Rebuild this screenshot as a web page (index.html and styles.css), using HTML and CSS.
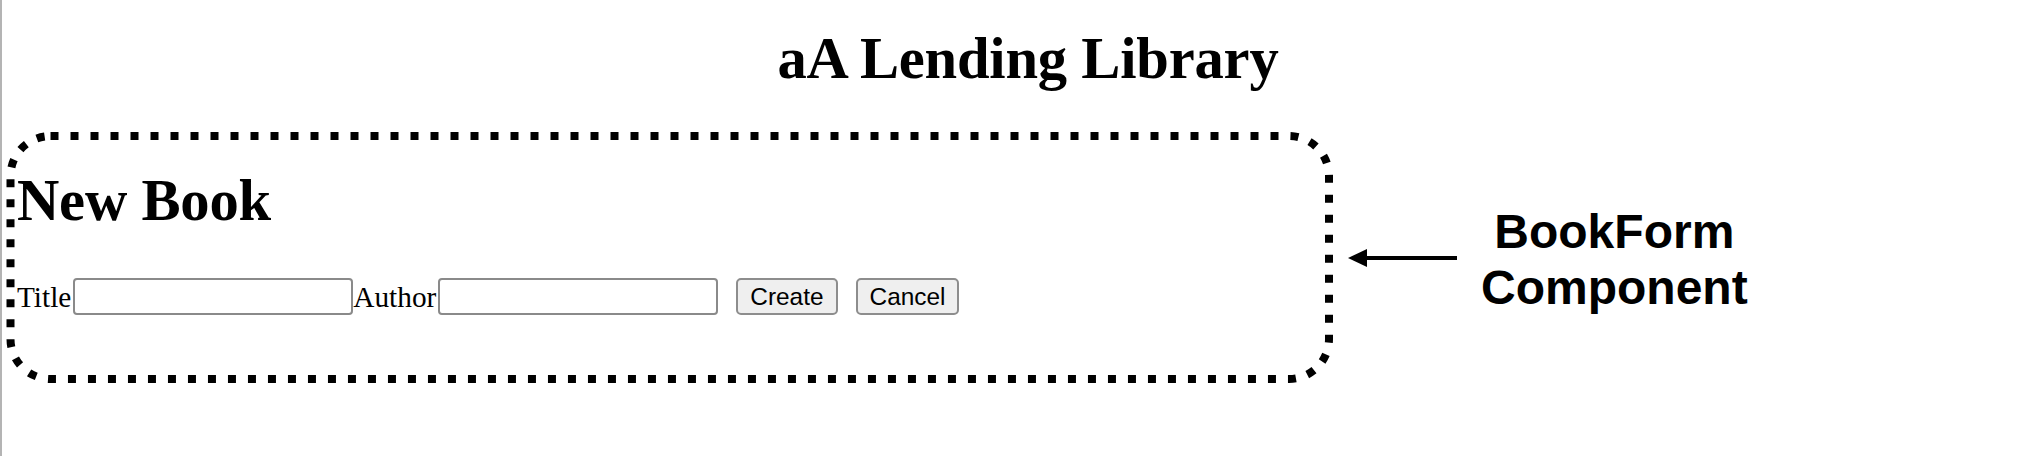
FILE: index.html
```html
<!DOCTYPE html>
<html lang="en">
<head>
<meta charset="utf-8">
<title>aA Lending Library</title>
<link rel="stylesheet" href="styles.css">
</head>
<body>
<div class="page">
  <header class="app-header">
    <h1 class="app-title">aA Lending Library</h1>
  </header>
  <div class="stage">
    <section class="book-form">
      <h1 class="form-title">New Book</h1>
      <form class="form-row">
        <label class="field-label" for="title">Title</label><input class="field-input" id="title" type="text">
        <label class="field-label" for="author">Author</label><input class="field-input" id="author" type="text">
        <button class="btn" type="button">Create</button>
        <button class="btn" type="button">Cancel</button>
      </form>
      <svg class="outline" viewBox="0 0 1332 251" preserveAspectRatio="none" aria-hidden="true">
        <rect x="8.5" y="4" width="1318.5" height="243" rx="40" ry="40" fill="none" stroke="#000" stroke-width="8" stroke-dasharray="8 12"/>
      </svg>
    </section>
    <div class="callout">
      <svg class="arrow" width="109" height="18" viewBox="0 0 109 18" aria-hidden="true">
        <line x1="16" y1="9" x2="109" y2="9" stroke="#000" stroke-width="4"/>
        <polygon points="0,9 19,0 19,18" fill="#000"/>
      </svg>
      <div class="callout-text">BookForm<br>Component</div>
    </div>
  </div>
</div>
</body>
</html>
```

FILE: styles.css
```css
html, body {
  margin: 0;
  padding: 0;
  background: #fff;
}

body {
  font-family: "Liberation Serif", "Times New Roman", serif;
  color: #000;
}

.page {
  border-left: 2px solid #b4b4b4;
  min-height: 100vh;
  box-sizing: border-box;
}

.app-header {
  padding: 25px 0 0 18px;
}

.app-title {
  margin: 0;
  font-size: 58.6px;
  line-height: 67px;
  font-weight: bold;
  text-align: center;
  letter-spacing: -0.2px;
}

.stage {
  display: flex;
  align-items: flex-start;
  margin-top: 40px;
}

.book-form {
  position: relative;
  box-sizing: border-box;
  width: 1332px;
  height: 251px;
  padding: 35px 0 0 15px;
  flex: none;
}

.form-title {
  margin: 0;
  font-size: 58.6px;
  line-height: 67px;
  font-weight: bold;
  letter-spacing: -0.2px;
}

.form-row {
  display: flex;
  align-items: center;
  margin: 44px 0 0 0;
}

.field-label {
  font-size: 29.3px;
  line-height: 34px;
}

.field-input {
  box-sizing: border-box;
  width: 280px;
  height: 37px;
  margin: 0 0 0 2px;
  padding: 2px 4px;
  border: 2px solid #8a8a8a;
  border-radius: 4px;
  background: #fff;
  font-size: 24px;
}

.btn {
  box-sizing: border-box;
  height: 37px;
  margin-left: 18px;
  padding: 0 12px;
  border: 2px solid #8d8d8d;
  border-radius: 5px;
  background: #efefef;
  color: #000;
  font-family: "Liberation Sans", Arial, sans-serif;
  font-size: 24.4px;
  line-height: 33px;
}

.outline {
  position: absolute;
  left: 0;
  top: 0;
  width: 100%;
  height: 100%;
  pointer-events: none;
}

.callout {
  display: flex;
  align-items: flex-start;
  margin: 72px 0 0 14px;
}

.arrow {
  display: block;
  flex: none;
  margin-top: 45px;
}

.callout-text {
  margin-left: 24px;
  font-family: "Liberation Sans", Arial, sans-serif;
  font-weight: bold;
  font-size: 48px;
  line-height: 56px;
  text-align: center;
}
```
